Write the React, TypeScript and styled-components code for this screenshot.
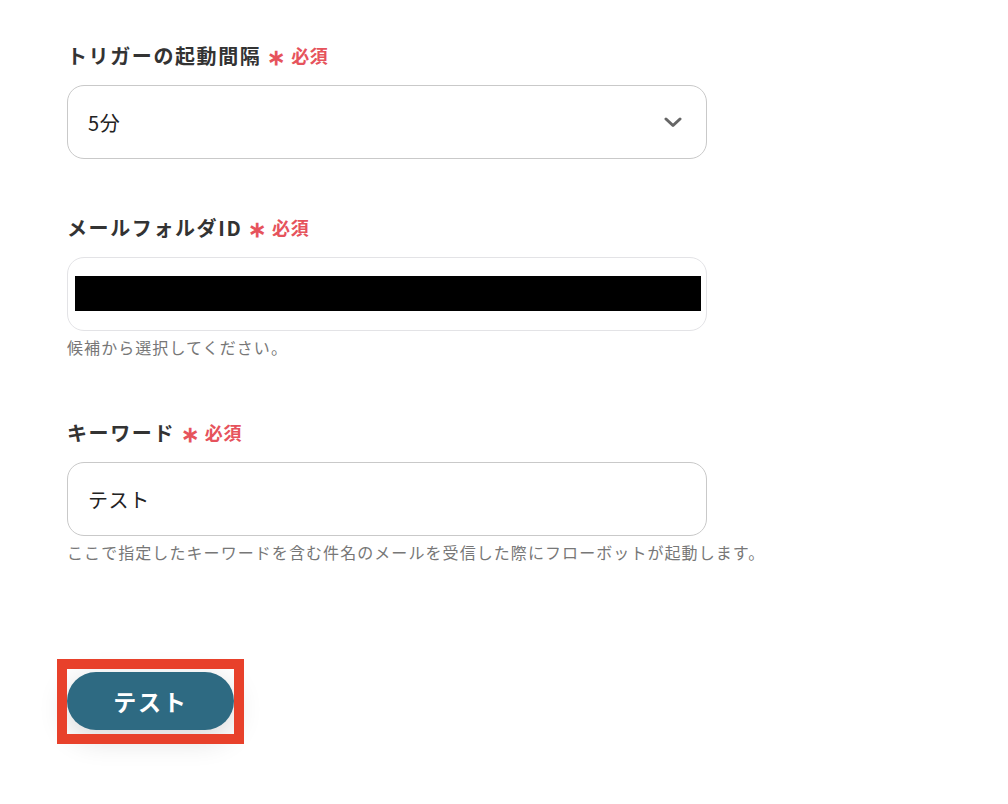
import React from "react";
import styled, { createGlobalStyle } from "styled-components";

const Global = createGlobalStyle`
  html, body { margin: 0; padding: 0; background: #ffffff; }
  body { font-family: "Noto Sans CJK JP", "Noto Sans", sans-serif; color: #222; }
`;

const Page = styled.div`
  padding: 41px 0 70px 67px;
  width: 640px;
  display: flex;
  flex-direction: column;
`;

const Field = styled.div<{ $gapTop?: number }>`
  display: flex;
  flex-direction: column;
  margin-top: ${(p) => p.$gapTop ?? 0}px;
`;

const Label = styled.div`
  display: flex;
  align-items: center;
  height: 28px;
  font-size: 20px;
  font-weight: 700;
  color: #333;
  letter-spacing: 0.08em;
  margin-bottom: 16px;
`;

const Required = styled.span`
  display: inline-flex;
  align-items: center;
  margin-left: 6px;
  color: #e6535c;
  font-size: 18px;
  font-weight: 700;
  letter-spacing: 0.04em;
`;

const Star = styled.span`
  font-size: 22px;
  margin-right: 5px;
  line-height: 1;
`;

const Box = styled.div<{ $light?: boolean }>`
  box-sizing: border-box;
  height: 74px;
  border: 1px solid ${(p) => (p.$light ? "#e3e3e6" : "#c9c9c9")};
  border-radius: 17px;
  display: flex;
  align-items: center;
  justify-content: space-between;
  padding: 0 24px 0 20px;
  font-size: 20px;
  color: #222;
  background: #fff;
`;

const Value = styled.span`
  letter-spacing: 0.03em;
`;

const Masked = styled.div`
  height: 35px;
  flex: 1;
  margin: -1px -19px 0 -13px;
  background: #000;
`;

const Help = styled.div`
  margin-top: 1px;
  font-size: 16px;
  line-height: 30px;
  color: #777;
  letter-spacing: 0.067em;
  white-space: nowrap;
`;

const ButtonArea = styled.div`
  margin-top: 101px;
  align-self: flex-start;
  position: relative;
  padding: 4px 0;
  display: flex;
`;

const TestButton = styled.button`
  width: 167px;
  height: 58px;
  border: none;
  border-radius: 29px;
  background: #2e6a82;
  color: #fff;
  font-family: "Noto Sans CJK JP", "Noto Sans", sans-serif;
  font-size: 23px;
  font-weight: 700;
  letter-spacing: 0.08em;
  box-shadow: 0 8px 30px rgba(0, 0, 0, 0.16);
  cursor: pointer;
`;

const Highlight = styled.div`
  position: absolute;
  left: -10px;
  top: -9px;
  right: -10px;
  bottom: -10px;
  border: 10px solid #e8412b;
  pointer-events: none;
`;

const Chevron = () => (
  <svg width="18" height="12" viewBox="0 0 18 12" fill="none">
    <polyline points="2,3 9,9.5 16,3" stroke="#666" strokeWidth="3" strokeLinecap="round" strokeLinejoin="round" />
  </svg>
);

const Req = () => (
  <Required>
    <Star>∗</Star>必須
  </Required>
);

export default function App() {
  return (
    <>
      <Global />
      <Page>
        <Field>
          <Label>
            トリガーの起動間隔<Req />
          </Label>
          <Box>
            <Value>5分</Value>
            <Chevron />
          </Box>
        </Field>
        <Field $gapTop={54}>
          <Label>
            メールフォルダID<Req />
          </Label>
          <Box $light>
            <Masked />
          </Box>
          <Help>候補から選択してください。</Help>
        </Field>
        <Field $gapTop={56}>
          <Label>
            キーワード<Req />
          </Label>
          <Box>
            <Value>テスト</Value>
          </Box>
          <Help>ここで指定したキーワードを含む件名のメールを受信した際にフローボットが起動します。</Help>
        </Field>
        <ButtonArea>
          <TestButton>テスト</TestButton>
          <Highlight />
        </ButtonArea>
      </Page>
    </>
  );
}
